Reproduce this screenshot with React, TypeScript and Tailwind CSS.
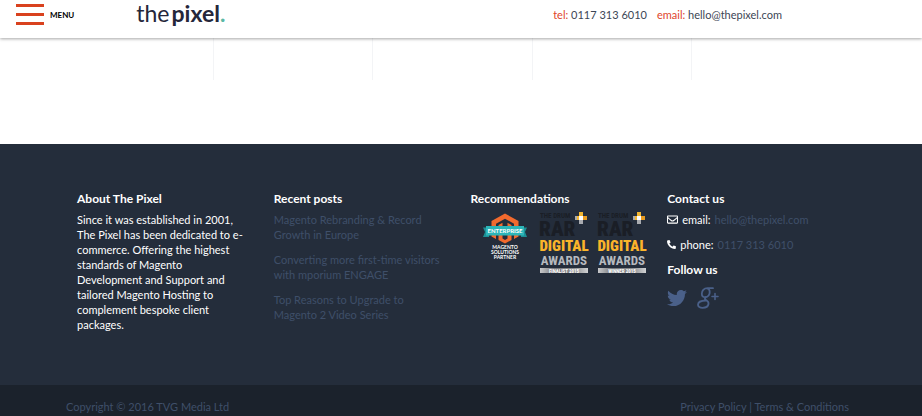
import React from "react";
import { FaRegEnvelope, FaPhoneAlt, FaTwitter } from "react-icons/fa";

const posts = [
  "Magento Rebranding & Record Growth in Europe",
  "Converting more first-time visitors with mporium ENGAGE",
  "Top Reasons to Upgrade to Magento 2 Video Series",
];

const Header = () => {
  return (
    <header className="relative flex h-[38px] items-start bg-white shadow-[0_1px_3px_rgba(0,0,0,0.35)]">
      <button type="button" className="flex items-center gap-1.5 pt-1 pl-4">
        <span className="flex w-7 flex-col gap-1.5">
          <span className="h-[3px] bg-[#d9411e]" />
          <span className="h-[3px] bg-[#d9411e]" />
          <span className="h-[3px] bg-[#d9411e]" />
        </span>
        <span className="text-[8px] font-bold text-black">MENU</span>
      </button>
      <a
        href="#"
        className="ml-[62px] flex font-['Lato',sans-serif] text-[23px] leading-[26px] text-[#25263a]"
      >
        the<span className="ml-0.5 font-bold">pixel</span>
        <span className="font-bold text-[#5cb8a5]">.</span>
      </a>
      <div className="mr-[140px] ml-auto flex gap-2.5 pt-1.5 text-[11px] leading-[17px] text-[#3c4655]">
        <p>
          <span className="text-[#e0452c]">tel:</span> 0117 313 6010
        </p>
        <p>
          <span className="text-[#e0452c]">email:</span> hello@thepixel.com
        </p>
      </div>
    </header>
  );
};

const MagentoBadge = () => {
  return (
    <svg viewBox="0 0 44 48" className="h-12 w-11" role="img" aria-label="Magento Enterprise Solutions Partner">
      <path d="M22 1.500 L35.500 9 V24.500 L31 27 V11.700 L22 6.700 L13 11.700 V27 L8.500 24.500 V9 Z" fill="#f26a2e" />
      <path d="M15.500 13 L19.500 10.800 V26.500 L22 28 L24.500 26.500 V10.800 L28.500 13 V28 L22 31.500 L15.500 28 Z" fill="#f26a2e" />
      <path d="M0 15.500 H6 V25 H0 L2 20 Z M44 15.500 H38 V25 H44 L42 20 Z" fill="#1c8f95" />
      <path d="M3 14 H41 V23.500 H3 Z" fill="#2cb5b8" />
      <text x="22" y="21" textAnchor="middle" fontSize="6" fontWeight="700" fill="#fff">
        ENTERPRISE
      </text>
      <g textAnchor="middle" fontSize="5" fontWeight="700" fill="#fff">
        <text x="22" y="37">MAGENTO</text>
        <text x="22" y="42">SOLUTIONS</text>
        <text x="22" y="47">PARTNER</text>
      </g>
    </svg>
  );
};

const RarBadge = ({ result, id }: { result: string; id: string }) => {
  return (
    <svg
      viewBox="0 0 50 64"
      className="h-16 w-[50px] font-['Roboto_Condensed','Open_Sans_Condensed','Roboto',sans-serif]"
      role="img"
      aria-label={`The Drum RAR Digital Awards ${result}`}
    >
      <defs>
        <linearGradient id={id}>
          <stop offset="0" stopColor="#c8c9cb" />
          <stop offset="0.3" stopColor="#77797c" />
          <stop offset="0.7" stopColor="#8b8d90" />
          <stop offset="1" stopColor="#d0d1d3" />
        </linearGradient>
      </defs>
      <text x="1" y="6" fontSize="7" fontWeight="700" fill="#1a1e26">THE DRUM</text>
      <text x="0" y="24" fontSize="21" fontWeight="900" fill="#1a1e26">RAR</text>
      <path d="M40 0 H44 V4 H40 Z M36 4 H40 V8 H36 Z" fill="#f2b632" />
      <path d="M44 4 H48 V8 H44 Z" fill="#e79b20" />
      <path d="M40 4 H44 V8 H40 Z" fill="#fff" />
      <path d="M40 8 H44 V12 H40 Z M36 4 H38 V8 H36 Z" fill="#a9abb0" />
      <text x="25" y="39" textAnchor="middle" fontSize="15" fontWeight="900" fill="#fbb42a">DIGITAL</text>
      <text x="25" y="53" textAnchor="middle" fontSize="13" fontWeight="700" fill="#b6b9be">AWARDS</text>
      <path d="M1 56 H49 V61 H1 Z" fill={`url(#${id})`} />
      <text x="25" y="60.500" textAnchor="middle" fontSize="5" fontWeight="700" fill="#fff">{result}</text>
    </svg>
  );
};

const GooglePlus = () => {
  return (
    <svg viewBox="0 0 22 22" className="h-[22px] w-[22px]" fill="none" stroke="currentColor" strokeLinecap="round">
      <path d="M16 1.200 H10.500 C6.800 1.200 4.800 4 4.800 6.700 C4.800 9 6.200 10.200 8.200 10.200 C11.200 10.200 12.900 7.500 12.700 4.700 C12.600 2.800 11.500 1.400 10 1.300" strokeWidth="1.8" />
      <path d="M8.800 10.300 C7.300 11.600 7.800 12.400 9.300 13.300 C11 14.300 11.800 15.200 11.500 17 C11.100 19.400 8.500 20.800 5.600 20.800 C2.900 20.800 1 19.700 1 17.700 C1 15 4.300 13.600 8.800 13.500" strokeWidth="1.8" />
      <path d="M18 6.500 V12.500 M15 9.500 H21" strokeWidth="1.6" />
    </svg>
  );
};

const Footer = () => {
  return (
    <footer className="bg-[#242d3b] text-[11px] leading-[15px] text-white">
      <div className="grid min-h-[241px] grid-cols-4 pt-[47px] pr-[58px] pl-[77px]">
        <section className="pr-6">
          <h2 className="mb-1.5 text-[12px] leading-[15px] font-bold">About The Pixel</h2>
          <p>
            Since it was established in 2001, The Pixel has been dedicated to e-commerce. Offering
            the highest standards of Magento Development and Support and tailored Magento Hosting
            to complement bespoke client packages.
          </p>
        </section>

        <section className="pr-6">
          <h2 className="mb-1.5 text-[12px] leading-[15px] font-bold">Recent posts</h2>
          <ul className="flex flex-col gap-2.5 text-[#3f4f69]">
            {posts.map((post) => (
              <li key={post}>
                <a href="#">{post}</a>
              </li>
            ))}
          </ul>
        </section>

        <section>
          <h2 className="mb-1.5 text-[12px] leading-[15px] font-bold">Recommendations</h2>
          <div className="flex items-start pl-3">
            <MagentoBadge />
            <div className="flex gap-2 pl-3">
              <RarBadge result="FINALIST 2015" id="finalist" />
              <RarBadge result="WINNER 2015" id="winner" />
            </div>
          </div>
        </section>

        <section>
          <h2 className="mb-1.5 text-[12px] leading-[15px] font-bold">Contact us</h2>
          <p className="mb-2.5 flex items-center gap-1">
            <FaRegEnvelope />
            email: <a href="mailto:hello@thepixel.com" className="text-[#3f4f69]">hello@thepixel.com</a>
          </p>
          <p className="mb-2.5 flex items-center gap-1">
            <FaPhoneAlt className="text-[9px]" />
            phone: <a href="tel:01173136010" className="text-[#3f4f69]">0117 313 6010</a>
          </p>
          <h2 className="mb-2.5 text-[12px] leading-[15px] font-bold">Follow us</h2>
          <div className="flex items-center gap-2.5 text-[#4a6089]">
            <a href="#" aria-label="Twitter"><FaTwitter size={20} /></a>
            <a href="#" aria-label="Google Plus"><GooglePlus /></a>
          </div>
        </section>
      </div>

      <div className="flex justify-between bg-[#1b222c] pt-3.5 pr-[73px] pb-1 pl-[66px] text-[#3f4f69]">
        <p>Copyright © 2016 TVG Media Ltd</p>
        <p>
          <a href="#">Privacy Policy</a> | <a href="#">Terms &amp; Conditions</a>
        </p>
      </div>
    </footer>
  );
};

export default function App() {
  return (
    <div className="bg-white font-['Lato','Open_Sans',sans-serif]">
      <Header />
      <main className="grid h-[106px] grid-cols-5 pr-[71px] pb-16 pl-[55px]">
        <div className="border-r border-gray-100" />
        <div className="border-r border-gray-100" />
        <div className="border-r border-gray-100" />
        <div className="border-r border-gray-100" />
      </main>
      <Footer />
    </div>
  );
}
